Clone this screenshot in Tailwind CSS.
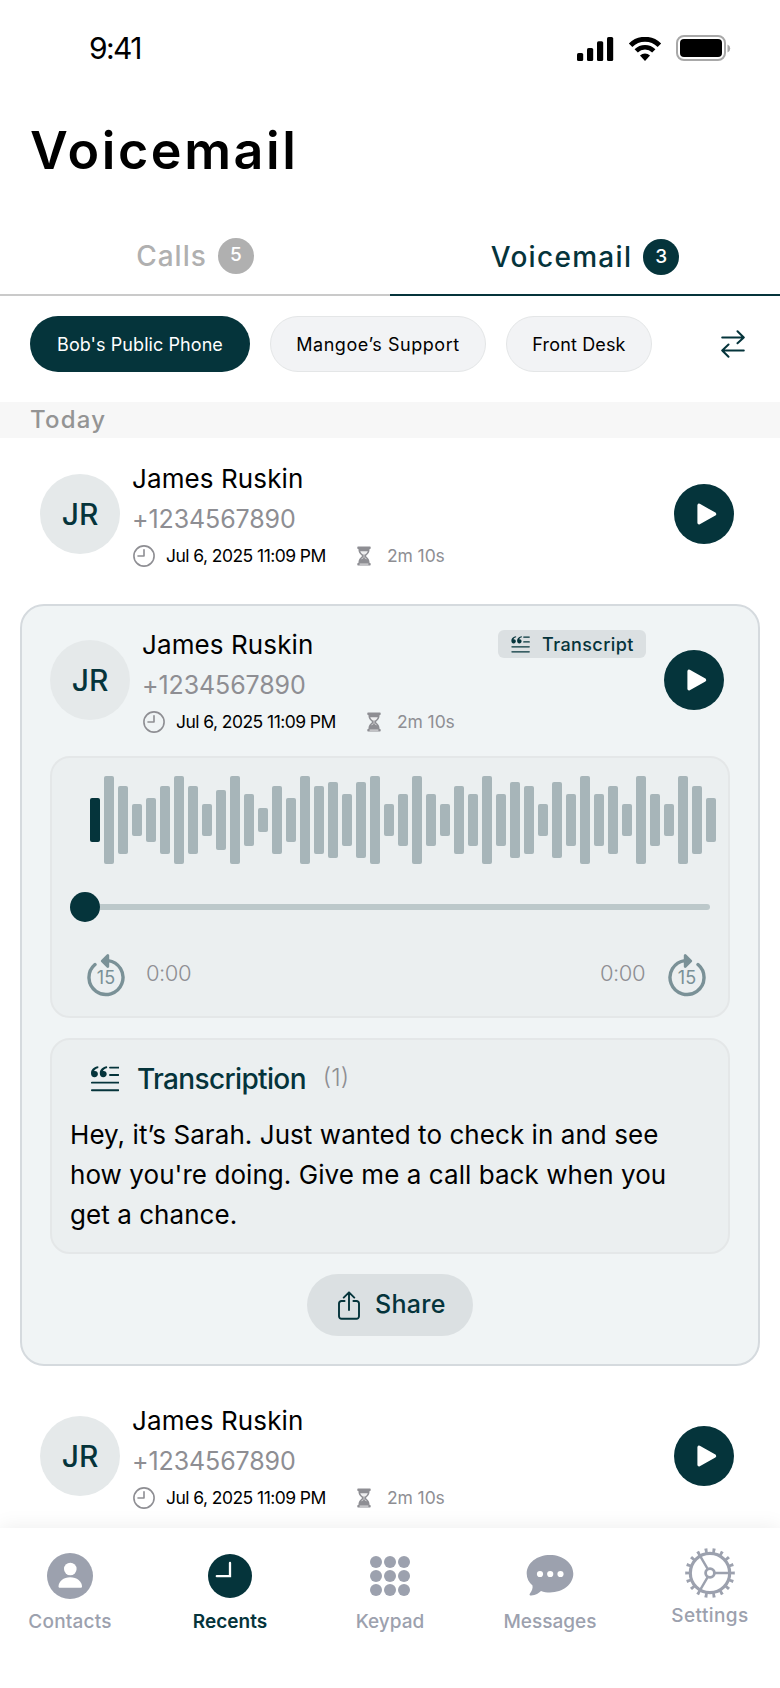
<!DOCTYPE html>
<html lang="en">
<head>
    <meta charset="UTF-8">
    <meta name="viewport" content="width=device-width, initial-scale=1.0">
    <title>Voicemail</title>
    <script src="https://cdn.jsdelivr.net/npm/@tailwindcss/browser@4"></script>
    <style>
        body {
            font-family: 'Inter', 'Liberation Sans', sans-serif;
        }
    </style>
</head>
<body class="bg-white text-black">
    <!-- Shared icons -->
    <svg class="hidden">
        <symbol id="icon-clock" viewBox="0 0 22 22">
            <circle cx="11" cy="11" r="10.1" fill="none" stroke="currentColor" stroke-width="1.6"/>
            <path d="M11 4.8V11H5" fill="none" stroke="currentColor" stroke-width="1.6" stroke-linecap="round" stroke-linejoin="round"/>
        </symbol>
        <symbol id="icon-hourglass" viewBox="0 0 14 20">
            <path d="M1 .5h12a.7.7 0 0 1 .7.7v1.100a.7.7 0 0 1-.7.7h-.4c0 3.300-1.400 4.900-3.400 6.500v1c2 1.600 3.400 3.200 3.400 6.500h.4a.7.7 0 0 1 .7.7v1.100a.7.7 0 0 1-.7.7H1a.7.7 0 0 1-.7-.7v-1.100a.7.7 0 0 1 .7-.7h.4c0-3.300 1.400-4.900 3.400-6.500v-1C2.800 7.900 1.400 6.300 1.400 3H1a.7.7 0 0 1-.7-.7V1.200A.7.7 0 0 1 1 .5z" fill="currentColor"/>
            <path d="M3.200 5.200h7.600c-.5 1.500-1.500 2.400-3 3.600v2.400c.9.700 1.700 1.300 2.300 2.200L7 11.800l-3.100 1.600c.6-.9 1.400-1.500 2.300-2.200V8.800c-1.500-1.200-2.500-2.100-3-3.600z" fill="#fff" fill-opacity=".85"/>
            <path d="M6.400 8.500h1.200v4H6.400z" fill="currentColor"/>
            <path d="M2.600 18.100h8.800" stroke="#fff" stroke-width=".8"/>
        </symbol>
        <symbol id="icon-play" viewBox="0 0 20 22">
            <path d="M2 2.200v17.600L17.600 11z" fill="currentColor" stroke="currentColor" stroke-width="3.200" stroke-linejoin="round"/>
        </symbol>
        <symbol id="icon-quote" viewBox="0 0 28 26">
            <g fill="currentColor">
                <path d="M7.200.3C3 .9 0 3.400 0 7.300c0 2.400 1.400 4 3.500 4 2 0 3.400-1.300 3.400-3.200S5.600 5 3.900 5c-.4 0-.7 0-1 .2.700-1.700 2.300-2.800 4.500-3.300z"/>
                <path d="M16 .3c-4.200.6-7.200 3.100-7.200 7 0 2.400 1.400 4 3.500 4 2 0 3.400-1.300 3.400-3.200S14.400 5 12.700 5c-.4 0-.7 0-1 .2.700-1.700 2.300-2.800 4.500-3.300z"/>
            </g>
            <path d="M19 1.600h8.400M19 9h8.400M.9 16.600h26.500M.9 24.200h26.500" stroke="currentColor" stroke-width="1.900" stroke-linecap="round"/>
        </symbol>
        <symbol id="icon-rewind" viewBox="0 0 38 44">
            <path d="M8 10.500A17 17 0 1 0 21 6.600" fill="none" stroke="currentColor" stroke-width="3.400" stroke-linecap="round"/>
            <path d="M20.800 1.600v10.900L15.300 7z" fill="currentColor" stroke="currentColor" stroke-width="2.800" stroke-linejoin="round"/>
        </symbol>
    </svg>

    <div class="relative w-[780px] h-[1688px] overflow-hidden bg-white">
        <!-- Status bar -->
        <div class="flex items-center justify-between h-24 pl-[89px] pr-[49px]">
            <span class="-mt-px text-[30px] leading-none tracking-[-1.6px]">9:41</span>
            <div class="flex items-center gap-[14px]">
                <svg class="w-[37px] h-6 mt-[2px]" viewBox="0 0 37 24">
                    <rect x="0" y="16" width="6.200" height="8" rx="1.600"/>
                    <rect x="10" y="11" width="6.200" height="13" rx="1.600"/>
                    <rect x="20" y="4.200" width="6.200" height="19.800" rx="1.600"/>
                    <rect x="30" y="0" width="6.200" height="24" rx="1.600"/>
                </svg>
                <svg class="w-[34px] h-6 mt-[2px]" viewBox="0 0 34 24">
                    <path d="M2.600 8.200a20.500 20.500 0 0 1 28.800 0" fill="none" stroke="#000" stroke-width="5"/>
                    <path d="M8.200 13.900a12.500 12.500 0 0 1 17.600 0" fill="none" stroke="#000" stroke-width="4.600"/>
                    <path d="M17 24l-5-5.600a7.200 7.200 0 0 1 10 0z"/>
                </svg>
                <svg class="w-[55px] h-[26px]" viewBox="0 0 55 26">
                    <rect x="1" y="1" width="48" height="24" rx="7" fill="none" stroke="#a8a8a8" stroke-width="2"/>
                    <rect x="4" y="4" width="42" height="18" rx="4"/>
                    <path d="M51.500 9.500v8a4.300 4.300 0 0 0 0-8z" fill="#a8a8a8"/>
                </svg>
            </div>
        </div>

        <h1 class="h-[110px] pl-[30px] text-[52px] leading-[110px] font-semibold tracking-[2.6px]">Voicemail</h1>

        <!-- Tabs -->
        <div class="grid grid-cols-2 h-[90px] text-[28px]">
            <div class="flex items-center justify-center gap-[11px] border-b-2 border-[#cacaca] pt-[11px] text-[#b0b0b0]">
                <span class="font-medium tracking-[1px]">Calls</span>
                <span class="flex items-center justify-center size-9 rounded-full bg-[#b0b0b0] text-[19px] font-medium text-white">5</span>
            </div>
            <div class="flex items-center justify-center gap-[11px] border-b-2 border-[#05343b] pt-[14px] text-[#05343b]">
                <span class="font-medium tracking-[1.3px]">Voicemail</span>
                <span class="flex items-center justify-center size-9 rounded-full bg-[#05343b] text-[19px] font-medium text-white">3</span>
            </div>
        </div>

        <!-- Line filter -->
        <div class="flex items-center h-[76px] pt-5 pl-[30px] pr-[35px] text-[18px]">
            <div class="flex items-center justify-center w-[220px] h-14 rounded-full bg-[#05343b] tracking-[0.07px] text-white">Bob's Public Phone</div>
            <div class="flex items-center justify-center w-[216px] h-14 ml-5 rounded-full border border-[#e4e6e7] bg-[#f2f3f5] tracking-[0.55px]">Mangoe’s Support</div>
            <div class="flex items-center justify-center w-[146px] h-14 ml-5 rounded-full border border-[#e4e6e7] bg-[#f2f3f5] tracking-[0.15px]">Front Desk</div>
            <svg class="w-6 h-7 ml-auto" viewBox="0 0 24 28" fill="none" stroke="#05343b" stroke-width="2" stroke-linecap="round" stroke-linejoin="round">
                <path d="M1.200 7.500h21.600M16.500 1.200l6.300 6.300-6.300 5.800M22.800 20.500H1.200M7.500 14.500l-6.300 6 6.300 6.300"/>
            </svg>
        </div>

        <div class="h-9 mt-[30px] pl-[30px] bg-[#f7f7f7] text-2xl leading-9 font-medium tracking-[1.2px] text-[#949494]">Today</div>

        <!-- Collapsed voicemail -->
        <div class="flex items-center h-[152px] pl-10 pr-[46px]">
            <div class="flex items-center justify-center size-20 rounded-full bg-[#e5e9ea] text-[30px] font-medium text-[#05343b]">JR</div>
            <div class="ml-3 mt-1">
                <div class="text-[26px] leading-10 tracking-[0.1px]">James Ruskin</div>
                <div class="text-[25px] leading-10 tracking-[-0.1px] text-[#8e8e93]">+1234567890</div>
                <div class="flex items-center h-[34px] pl-px text-[17.5px] leading-[26px]">
                    <svg class="size-[22px] text-[#8e8e93]"><use href="#icon-clock"/></svg>
                    <span class="w-[178px] ml-[11px] -mt-px tracking-[-0.55px]">Jul 6, 2025 11:09 PM</span>
                    <svg class="w-[14px] h-5 ml-[13px] text-[#8e8e93]"><use href="#icon-hourglass"/></svg>
                    <span class="ml-4 -mt-px tracking-[-0.1px] text-[#8e8e93]">2m 10s</span>
                </div>
            </div>
            <div class="flex items-center justify-center size-[60px] ml-auto rounded-full bg-[#05343b] pl-[6px] text-white">
                <svg class="w-5 h-[22px]"><use href="#icon-play"/></svg>
            </div>
        </div>

        <!-- Expanded voicemail -->
        <div class="h-[762px] mx-5 my-[14px] rounded-[24px] border-2 border-[#d5dade] bg-[#f0f4f5] px-7">
            <div class="flex h-[150px] pr-[6px]">
                <div class="flex items-center justify-center size-20 mt-[34px] rounded-full bg-[#e5e9ea] text-[30px] font-medium text-[#05343b]">JR</div>
                <div class="ml-3 mt-[19px]">
                    <div class="text-[26px] leading-10 tracking-[0.1px]">James Ruskin</div>
                    <div class="text-[25px] leading-10 tracking-[-0.1px] text-[#8e8e93]">+1234567890</div>
                    <div class="flex items-center h-[34px] pl-px text-[17.5px] leading-[26px]">
                        <svg class="size-[22px] text-[#8e8e93]"><use href="#icon-clock"/></svg>
                        <span class="w-[178px] ml-[11px] -mt-px tracking-[-0.55px]">Jul 6, 2025 11:09 PM</span>
                        <svg class="w-[14px] h-5 ml-[13px] text-[#8e8e93]"><use href="#icon-hourglass"/></svg>
                        <span class="ml-4 -mt-px tracking-[-0.1px] text-[#8e8e93]">2m 10s</span>
                    </div>
                </div>
                <div class="flex items-center w-[148px] h-7 mt-6 ml-auto pl-[13px] rounded-md bg-[#dbe0e2] text-[18px] font-medium text-[#05343b]">
                    <svg class="w-[19px] h-[17px]"><use href="#icon-quote"/></svg>
                    <span class="ml-3 tracking-[0.4px]">Transcript</span>
                </div>
                <div class="flex items-center justify-center size-[60px] mt-11 ml-[18px] rounded-full bg-[#05343b] pl-[6px] text-white">
                    <svg class="w-5 h-[22px]"><use href="#icon-play"/></svg>
                </div>
            </div>

            <!-- Player -->
            <div class="h-[262px] rounded-[20px] border-2 border-[#e4e7e8] bg-[#ebeff0] px-[18px] pt-[18px]">
                <div id="waveform" class="flex items-center gap-1 h-[88px] pl-5"></div>
                <div class="flex items-center h-[30px] mt-7">
                    <div class="size-[30px] rounded-full bg-[#05343b]"></div>
                    <div class="flex-1 h-[6px] rounded-r-full bg-[#bcc8ca]"></div>
                </div>
                <div class="flex items-start justify-between mt-8 pl-[17px] pr-1">
                    <div class="flex items-start">
                        <div class="relative w-[38px] h-11 text-[#7a9197]">
                            <svg class="w-[38px] h-11"><use href="#icon-rewind"/></svg>
                            <span class="absolute inset-x-0 top-[14px] text-center text-[18px] leading-5">15</span>
                        </div>
                        <span class="ml-[21px] mt-[3px] text-[22px] leading-8 font-light tracking-[-0.5px] text-[#8e8e93]">0:00</span>
                    </div>
                    <div class="flex items-start">
                        <span class="mr-[23px] mt-[3px] text-[22px] leading-8 font-light tracking-[-0.5px] text-[#8e8e93]">0:00</span>
                        <div class="relative w-[38px] h-11 text-[#7a9197]">
                            <svg class="w-[38px] h-11 -scale-x-100"><use href="#icon-rewind"/></svg>
                            <span class="absolute inset-x-0 top-[14px] text-center text-[18px] leading-5">15</span>
                        </div>
                    </div>
                </div>
            </div>

            <!-- Transcription -->
            <div class="h-[216px] mt-5 rounded-[20px] border-2 border-[#e4e7e8] bg-[#ebeff0] px-[18px] pt-[18px]">
                <div class="flex items-center h-10 pl-[21px]">
                    <svg class="w-7 h-[26px] mt-px text-[#05343b]"><use href="#icon-quote"/></svg>
                    <span class="ml-[18px] mt-px text-[28px] font-medium tracking-[-0.65px] text-[#05343b]">Transcription</span>
                    <span class="ml-[17px] text-2xl font-light text-[#8e8e93]">(1)</span>
                </div>
                <p class="mt-[17px] text-[26px] leading-10 tracking-[0.06px] whitespace-nowrap">Hey, it’s Sarah. Just wanted to check in and see<br>how you're doing. Give me a call back when you<br>get a chance.</p>
            </div>

            <div class="flex items-center w-[166px] h-[62px] mt-5 mx-auto pl-[31px] rounded-full bg-[#dbe0e2] text-[#05343b]">
                <svg class="w-[22px] h-[29px]" viewBox="0 0 22 29" fill="none" stroke="currentColor" stroke-width="1.900" stroke-linecap="round" stroke-linejoin="round">
                    <path d="M6.600 10H3.500A2.500 2.500 0 0 0 1 12.500v12.800a2.500 2.500 0 0 0 2.500 2.500h15a2.500 2.500 0 0 0 2.500-2.500V12.500A2.500 2.500 0 0 0 18.500 10h-3.100M11 19V1.500M5.700 6.600L11 1.300l5.300 5.300"/>
                </svg>
                <span class="ml-[15px] text-[25px] font-medium tracking-[0.3px]">Share</span>
            </div>
        </div>

        <!-- Collapsed voicemail -->
        <div class="flex items-center h-[152px] pl-10 pr-[46px]">
            <div class="flex items-center justify-center size-20 rounded-full bg-[#e5e9ea] text-[30px] font-medium text-[#05343b]">JR</div>
            <div class="ml-3 mt-1">
                <div class="text-[26px] leading-10 tracking-[0.1px]">James Ruskin</div>
                <div class="text-[25px] leading-10 tracking-[-0.1px] text-[#8e8e93]">+1234567890</div>
                <div class="flex items-center h-[34px] pl-px text-[17.5px] leading-[26px]">
                    <svg class="size-[22px] text-[#8e8e93]"><use href="#icon-clock"/></svg>
                    <span class="w-[178px] ml-[11px] -mt-px tracking-[-0.55px]">Jul 6, 2025 11:09 PM</span>
                    <svg class="w-[14px] h-5 ml-[13px] text-[#8e8e93]"><use href="#icon-hourglass"/></svg>
                    <span class="ml-4 -mt-px tracking-[-0.1px] text-[#8e8e93]">2m 10s</span>
                </div>
            </div>
            <div class="flex items-center justify-center size-[60px] ml-auto rounded-full bg-[#05343b] pl-[6px] text-white">
                <svg class="w-5 h-[22px]"><use href="#icon-play"/></svg>
            </div>
        </div>

        <!-- Bottom navigation, lies over the list -->
        <nav class="absolute inset-x-0 bottom-0 h-40 bg-white shadow-[0_0_20px_rgba(0,0,0,0.08)]">
            <div class="grid grid-cols-5 -mx-[10px] text-[19px] font-medium text-[#9ca1ae]">
                <div class="flex flex-col items-center pt-[25px]">
                    <svg class="size-[46px]" viewBox="0 0 46 46">
                        <circle cx="23" cy="23" r="23" fill="#9ca1ae"/>
                        <circle cx="23.300" cy="16" r="6.300" fill="#fff"/>
                        <path d="M11.500 33.500c0-5 5-9.300 11.700-9.300S35 28.500 35 33.500c0 .9-.6 1.300-1.400 1.300H13c-.9 0-1.500-.4-1.500-1.300z" fill="#fff"/>
                    </svg>
                    <span class="mt-[9px] leading-7 tracking-[0.2px]">Contacts</span>
                </div>
                <div class="flex flex-col items-center pt-[25px] text-[#05343b]">
                    <svg class="size-[46px]" viewBox="0 0 46 46">
                        <circle cx="23" cy="23" r="22" fill="#05343b"/>
                        <path d="M23 10v13.200H9.800" fill="none" stroke="#fff" stroke-width="2.300" stroke-linecap="round"/>
                    </svg>
                    <span class="mt-[9px] leading-7 font-semibold">Recents</span>
                </div>
                <div class="flex flex-col items-center pt-[25px]">
                    <svg class="size-[46px]" viewBox="0 0 46 46" fill="#9ca1ae">
                        <circle cx="9" cy="9" r="6"/><circle cx="23" cy="9" r="6"/><circle cx="37" cy="9" r="6"/>
                        <circle cx="9" cy="23" r="6"/><circle cx="23" cy="23" r="6"/><circle cx="37" cy="23" r="6"/>
                        <circle cx="9" cy="37" r="6"/><circle cx="23" cy="37" r="6"/><circle cx="37" cy="37" r="6"/>
                    </svg>
                    <span class="mt-[9px] leading-7">Keypad</span>
                </div>
                <div class="flex flex-col items-center pt-[25px]">
                    <svg class="w-12 h-[46px]" viewBox="0 0 48 46">
                        <path d="M24 2C11 2 .7 10 .7 20.700c0 4.700 2.200 8.600 5.800 11.700.6 2.600-.8 5.900-2.700 8.300-.8 1 .1 2.100 1.500 1.900 4.400-.7 7.600-2.600 9.700-4.700 2.800 1 5.800 1.500 9 1.500 13 0 23.300-8.200 23.300-18.700S37 2 24 2z" fill="#9ca1ae"/>
                        <g fill="#fff"><circle cx="14" cy="21" r="3.100"/><circle cx="24.200" cy="21" r="3.100"/><circle cx="34.500" cy="21" r="3.100"/></g>
                    </svg>
                    <span class="mt-[9px] leading-7">Messages</span>
                </div>
                <div class="flex flex-col items-center pt-5">
                    <svg class="size-[50px]" viewBox="0 0 50 50" fill="none" stroke="#9ca1ae">
                        <circle cx="25" cy="25" r="22.500" stroke-width="4.600" pathLength="18" stroke-dasharray=".36 .64" stroke-dashoffset=".18"/>
                        <circle cx="25" cy="25" r="19.700" stroke-width="3.200"/>
                        <circle cx="25" cy="25" r="4.400" stroke-width="2.800"/>
                        <path d="M30 25h14M22.500 20.700l-7-12.100M22.500 29.300l-7 12.100" stroke-width="2.400"/>
                    </svg>
                    <span class="mt-1 leading-7 tracking-[0.4px]">Settings</span>
                </div>
            </div>
        </nav>
    </div>

    <script>
        const levels = [
            44, 88, 68, 32, 44, 68, 88, 68, 32, 60, 88, 52, 24, 68, 44,
            88, 68, 76, 52, 76, 88, 32, 52, 88, 52, 32, 68, 52, 88, 52,
            76, 68, 32, 76, 52, 88, 52, 68, 32, 88, 52, 32, 88, 68, 44
        ];
        const waveform = document.getElementById('waveform');

        levels.forEach((level, index) => {
            const bar = document.createElement('div');
            // Only the first bar has been played
            bar.className = index === 0
                ? 'w-[10px] shrink-0 rounded-[2px] bg-[#05343b]'
                : 'w-[10px] shrink-0 rounded-[2px] bg-[#a7b5b9]';
            bar.style.height = `${level}px`;
            waveform.appendChild(bar);
        });
    </script>
</body>
</html>
